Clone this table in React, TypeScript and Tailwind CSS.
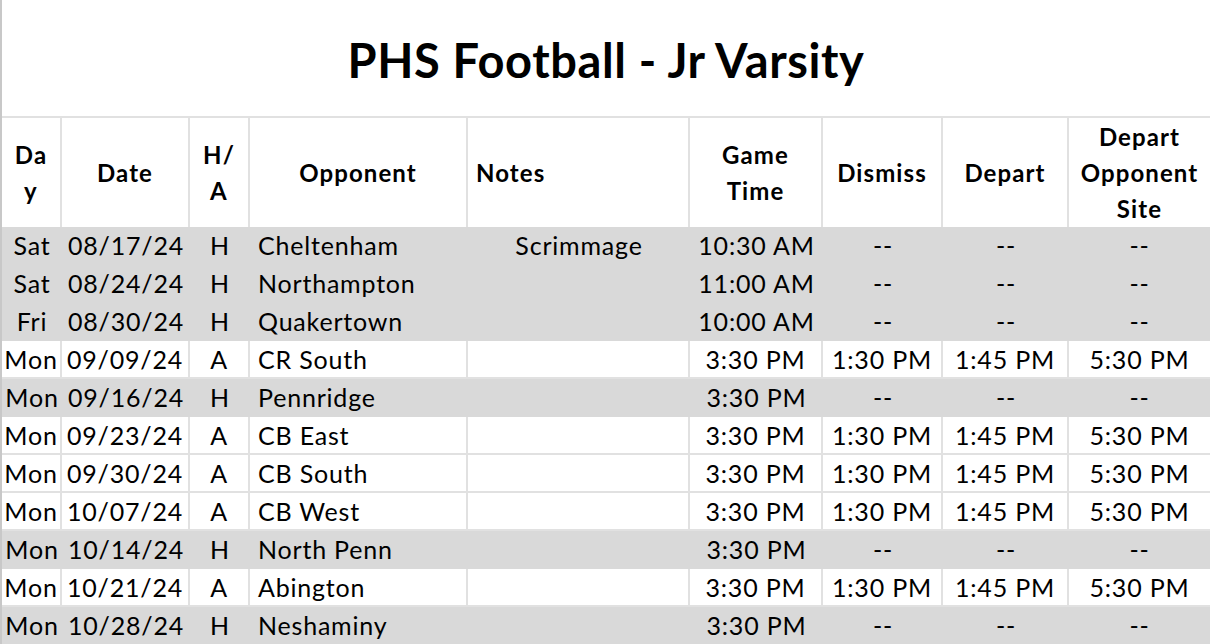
import React from "react";

interface Game {
  day: string;
  date: string;
  ha: "H" | "A";
  opponent: string;
  notes?: string;
  time: string;
  dismiss: string;
  depart: string;
  departSite: string;
}

const games: Game[] = [
  { day: "Sat", date: "08/17/24", ha: "H", opponent: "Cheltenham", notes: "Scrimmage", time: "10:30 AM", dismiss: "--", depart: "--", departSite: "--" },
  { day: "Sat", date: "08/24/24", ha: "H", opponent: "Northampton", time: "11:00 AM", dismiss: "--", depart: "--", departSite: "--" },
  { day: "Fri", date: "08/30/24", ha: "H", opponent: "Quakertown", time: "10:00 AM", dismiss: "--", depart: "--", departSite: "--" },
  { day: "Mon", date: "09/09/24", ha: "A", opponent: "CR South", time: "3:30 PM", dismiss: "1:30 PM", depart: "1:45 PM", departSite: "5:30 PM" },
  { day: "Mon", date: "09/16/24", ha: "H", opponent: "Pennridge", time: "3:30 PM", dismiss: "--", depart: "--", departSite: "--" },
  { day: "Mon", date: "09/23/24", ha: "A", opponent: "CB East", time: "3:30 PM", dismiss: "1:30 PM", depart: "1:45 PM", departSite: "5:30 PM" },
  { day: "Mon", date: "09/30/24", ha: "A", opponent: "CB South", time: "3:30 PM", dismiss: "1:30 PM", depart: "1:45 PM", departSite: "5:30 PM" },
  { day: "Mon", date: "10/07/24", ha: "A", opponent: "CB West", time: "3:30 PM", dismiss: "1:30 PM", depart: "1:45 PM", departSite: "5:30 PM" },
  { day: "Mon", date: "10/14/24", ha: "H", opponent: "North Penn", time: "3:30 PM", dismiss: "--", depart: "--", departSite: "--" },
  { day: "Mon", date: "10/21/24", ha: "A", opponent: "Abington", time: "3:30 PM", dismiss: "1:30 PM", depart: "1:45 PM", departSite: "5:30 PM" },
  { day: "Mon", date: "10/28/24", ha: "H", opponent: "Neshaminy", time: "3:30 PM", dismiss: "--", depart: "--", departSite: "--" },
];

const cols = "grid grid-cols-[60px_128px_60px_218px_222px_133px_120px_126px_141px]";

export default function App() {
  return (
    <div className="w-[1210px] h-[644px] overflow-hidden bg-white border-l-2 border-[#c8c8c8] font-['Lato',sans-serif] text-black">
      <div className="h-[116px] flex items-center justify-center pt-1">
        <h1 className="text-[47px] font-bold tracking-[0.6px]">PHS Football - Jr Varsity</h1>
      </div>

      {/* header row */}
      <div className={`${cols} h-[111px] border-t-2 border-[#e1e1e1] text-[24px] font-bold leading-[36px] tracking-[1.1px]`}>
        <div className="flex items-center justify-center text-center border-r-2 border-[#e1e1e1]">Da<br />y</div>
        <div className="flex items-center justify-center border-r-2 border-[#e1e1e1]">Date</div>
        <div className="flex items-center justify-center text-center border-r-2 border-[#e1e1e1]">H/<br />A</div>
        <div className="flex items-center justify-center border-r-2 border-[#e1e1e1]">Opponent</div>
        <div className="flex items-center pl-2 border-r-2 border-[#e1e1e1]">Notes</div>
        <div className="flex items-center justify-center text-center border-r-2 border-[#e1e1e1]">Game<br />Time</div>
        <div className="flex items-center justify-center border-r-2 border-[#e1e1e1]">Dismiss</div>
        <div className="flex items-center justify-center border-r-2 border-[#e1e1e1]">Depart</div>
        <div className="flex items-center justify-center text-center">Depart<br />Opponent<br />Site</div>
      </div>

      {games.map((g) => {
        const home = g.ha === "H";
        const line = home ? "" : "border-r-2 border-[#e1e1e1]";
        return (
          <div
            key={g.date}
            className={`${cols} h-[38px] text-[25px] tracking-[0.8px] whitespace-nowrap ${
              home ? "bg-[#d9d9d9]" : "bg-white border-b-2 border-[#e1e1e1]"
            }`}
          >
            <div className={`flex items-center justify-center ${line}`}>{g.day}</div>
            <div className={`flex items-center justify-center ${line}`}>{g.date}</div>
            <div className={`flex items-center justify-center ${line}`}>{g.ha}</div>
            <div className={`flex items-center pl-2 ${line}`}>{g.opponent}</div>
            <div className={`flex items-center justify-center ${line}`}>{g.notes ?? ""}</div>
            <div className={`flex items-center justify-center ${line}`}>{g.time}</div>
            <div className={`flex items-center justify-center ${line}`}>{g.dismiss}</div>
            <div className={`flex items-center justify-center ${line}`}>{g.depart}</div>
            <div className="flex items-center justify-center">{g.departSite}</div>
          </div>
        );
      })}
    </div>
  );
}
